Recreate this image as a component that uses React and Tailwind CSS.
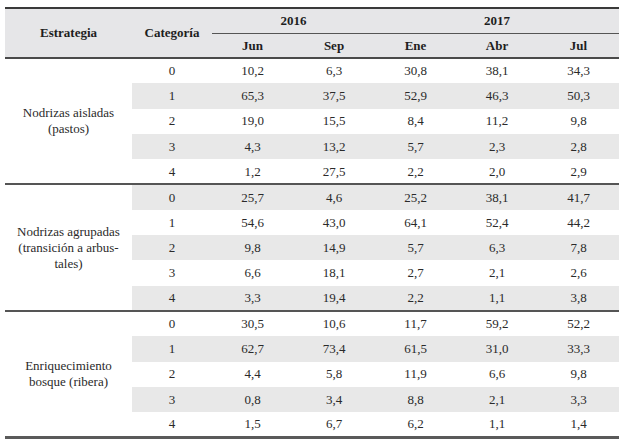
const groups = [
  {
    name: ["Nodrizas aisladas", "(pastos)"],
    rows: [
      ["10,2", "6,3", "30,8", "38,1", "34,3"],
      ["65,3", "37,5", "52,9", "46,3", "50,3"],
      ["19,0", "15,5", "8,4", "11,2", "9,8"],
      ["4,3", "13,2", "5,7", "2,3", "2,8"],
      ["1,2", "27,5", "2,2", "2,0", "2,9"],
    ],
  },
  {
    name: ["Nodrizas agrupadas", "(transición a arbus-", "tales)"],
    rows: [
      ["25,7", "4,6", "25,2", "38,1", "41,7"],
      ["54,6", "43,0", "64,1", "52,4", "44,2"],
      ["9,8", "14,9", "5,7", "6,3", "7,8"],
      ["6,6", "18,1", "2,7", "2,1", "2,6"],
      ["3,3", "19,4", "2,2", "1,1", "3,8"],
    ],
  },
  {
    name: ["Enriquecimiento", "bosque (ribera)"],
    rows: [
      ["30,5", "10,6", "11,7", "59,2", "52,2"],
      ["62,7", "73,4", "61,5", "31,0", "33,3"],
      ["4,4", "5,8", "11,9", "6,6", "9,8"],
      ["0,8", "3,4", "8,8", "2,1", "3,3"],
      ["1,5", "6,7", "6,2", "1,1", "1,4"],
    ],
  },
];

const months = ["Jun", "Sep", "Ene", "Abr", "Jul"];

export default function App() {
  let idx = 0;
  return (
    <div className="w-[624px] h-[441px] bg-white pt-[7px] pl-[5px] font-['Liberation_Serif','Times_New_Roman',serif] text-[13px] text-[#2a2a2a]">
      <table className="table-fixed border-collapse w-[614px]">
        <colgroup>
          <col className="w-[127px]" />
          <col className="w-[80px]" />
          <col className="w-[81px]" />
          <col className="w-[82px]" />
          <col className="w-[81px]" />
          <col className="w-[82px]" />
          <col className="w-[81px]" />
        </colgroup>
        <thead className="bg-[#e6e6e8] font-bold text-[#1e1e1e]">
          <tr className="h-[25px] border-t-2 border-[#3a3a3a]">
            <th rowSpan={2} className="text-center align-middle font-bold">Estrategia</th>
            <th rowSpan={2} className="text-center align-middle font-bold">Categoría</th>
            <th colSpan={2} className="text-center font-bold border-b border-[#555]">2016</th>
            <th colSpan={3} className="text-center font-bold border-b border-[#555]">2017</th>
          </tr>
          <tr className="h-[25px] border-b-2 border-[#4a4a4a]">
            {months.map((m) => (
              <th key={m} className="text-center font-bold">{m}</th>
            ))}
          </tr>
        </thead>
        {groups.map((g, gi) => (
          <tbody
            key={gi}
            className={gi < groups.length - 1 ? "border-b-2 border-[#555]" : "border-b-[3px] border-[#5a5a5a]"}
          >
            {g.rows.map((r, ri) => {
              const shaded = idx++ % 2 === 1;
              return (
                <tr key={ri} className="h-[25.3px]">
                  {ri === 0 && (
                    <td rowSpan={5} className="bg-white text-center align-middle leading-[16px]">
                      {g.name.map((n) => (
                        <div key={n}>{n}</div>
                      ))}
                    </td>
                  )}
                  <td className={`text-center ${shaded ? "bg-[#e8e8e8]" : ""}`}>{ri}</td>
                  {r.map((v, vi) => (
                    <td key={vi} className={`text-center ${shaded ? "bg-[#e8e8e8]" : ""}`}>
                      {v}
                    </td>
                  ))}
                </tr>
              );
            })}
          </tbody>
        ))}
      </table>
    </div>
  );
}
